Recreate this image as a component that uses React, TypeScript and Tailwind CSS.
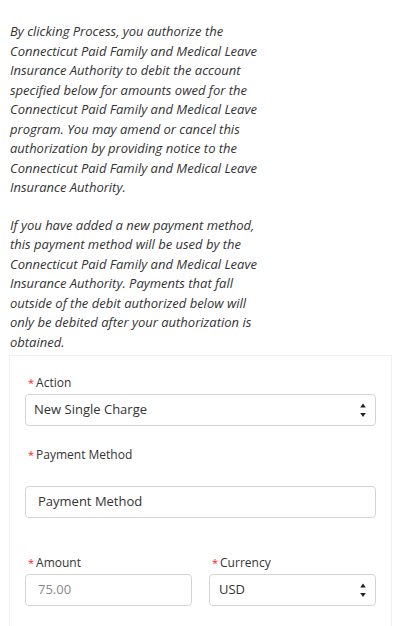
import React from 'react';

const para1 = [
  'By clicking Process, you authorize the',
  'Connecticut Paid Family and Medical Leave',
  'Insurance Authority to debit the account',
  'specified below for amounts owed for the',
  'Connecticut Paid Family and Medical Leave',
  'program. You may amend or cancel this',
  'authorization by providing notice to the',
  'Connecticut Paid Family and Medical Leave',
  'Insurance Authority.',
];

const para2 = [
  'If you have added a new payment method,',
  'this payment method will be used by the',
  'Connecticut Paid Family and Medical Leave',
  'Insurance Authority. Payments that fall',
  'outside of the debit authorized below will',
  'only be debited after your authorization is',
  'obtained.',
];

function Label({ children }: { children: React.ReactNode }) {
  return (
    <div className="flex items-center h-4 pl-[3px] text-[12px] leading-4 text-[#333]">
      <span className="text-[#f5222d] mr-[2px] text-[11px]">*</span>
      {children}
    </div>
  );
}

function Arrows() {
  return (
    <svg width="6" height="14" viewBox="0 0 6 14" className="absolute right-[9px] top-[8px]">
      <path d="M3 0.5 L5.8 4.5 H0.2 Z" fill="#222" />
      <path d="M3 14 L5.8 10 H0.2 Z" fill="#222" />
    </svg>
  );
}

export default function App() {
  return (
    <div className="w-[395px] h-[626px] overflow-hidden bg-white font-['Open_Sans',sans-serif]">
      <div className="pt-[22px] pl-[10px] italic text-[13px] leading-[19.5px] text-[#333]">
        <p>
          {para1.map((l, i) => (
            <span key={i} className="block whitespace-nowrap">{l}</span>
          ))}
        </p>
        <p className="mt-[18px]">
          {para2.map((l, i) => (
            <span key={i} className="block whitespace-nowrap">{l}</span>
          ))}
        </p>
      </div>

      <div className="mt-[3px] ml-[9px] w-[383px] border border-[#f0f0f0] border-b-0 px-[15px] pt-[19px] pb-8">
        <Label>Action</Label>
        <div className="relative mt-[3px] h-8 rounded border border-[#d4d4d4] flex items-center pl-[8px] text-[13px] text-[#333]">
          New Single Charge
          <Arrows />
        </div>

        <div className="mt-[21px]">
          <Label>Payment Method</Label>
        </div>
        <div className="mt-[23px] h-8 rounded border border-[#d4d4d4] flex items-center pl-[12px] text-[13px] text-[#333]">
          Payment Method
        </div>

        <div className="mt-[37px] grid grid-cols-2 gap-[17px]">
          <div>
            <Label>Amount</Label>
            <div className="mt-[3px] h-8 rounded border border-[#d4d4d4] flex items-center pl-[12px] text-[13px] text-[#888]">
              75.00
            </div>
          </div>
          <div>
            <Label>Currency</Label>
            <div className="relative mt-[3px] h-8 rounded border border-[#d4d4d4] flex items-center pl-[9px] text-[13px] text-[#333]">
              USD
              <Arrows />
            </div>
          </div>
        </div>
      </div>
    </div>
  );
}
